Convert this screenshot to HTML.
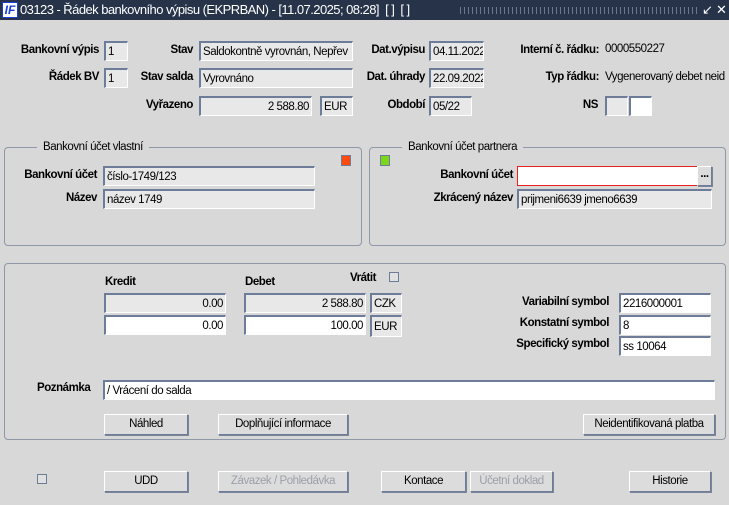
<!DOCTYPE html>
<html><head><meta charset="utf-8"><style>
*{box-sizing:border-box;margin:0;padding:0}
body{width:729px;height:505px;background:#d8d8d8;position:relative;overflow:hidden;font-family:"Liberation Sans",sans-serif;font-size:11.5px;letter-spacing:-0.45px;color:#000}
.a{position:absolute;white-space:nowrap}
.tb{left:0;top:0;width:729px;height:20px;background:#263349;color:#fff;font-size:13px;letter-spacing:-0.55px;line-height:20px}
.l{position:absolute;font-weight:bold;text-align:right;white-space:nowrap;line-height:14px}
.i{position:absolute;height:20px;background:#e8e8e8;border-top:2px solid #6d7c98;border-left:2px solid #6d7c98;border-right:1px solid #fff;border-bottom:1px solid #fff;padding:1px 2px 0;line-height:17px;white-space:nowrap;overflow:hidden}
.w{background:#fff}
.r{text-align:right}
.g{position:absolute;border:1px solid #8e98a8;border-radius:4px}
.gt{position:absolute;background:#d8d8d8;padding:0 6px;line-height:14px}
.b{position:absolute;height:21px;background:#dcdcdc;border:1px solid #6d7c98;border-top-color:#fff;border-left-color:#fff;box-shadow:1px 1px 0 #7a8599;text-align:center;line-height:19px}
.d{color:#9aa0aa}
.cb{position:absolute;width:10px;height:10px;border:1px solid #6d7c98;background:#e0e0e0}
</style></head><body>
<div class="a tb"><span style="display:inline-block;width:16px;height:16px;margin:2px 2px 0 2px;background:#fff;border:1px solid #1a3ed8;color:#1a3ed8;font-weight:bold;font-style:italic;font-size:12px;line-height:14px;text-align:center;vertical-align:top;letter-spacing:0">IF</span>03123 - Řádek bankovního výpisu (EKPRBAN) - [11.07.2025; 08:28]&nbsp; [ ]&nbsp; [ ]
<span style="position:absolute;left:460px;top:7px;width:238px;height:7px;background:repeating-linear-gradient(90deg,#6b7890 0 1px,transparent 1px 4px)"></span>
<span style="position:absolute;left:702px;top:0">&#8601;</span><span style="position:absolute;left:716px;top:0">✕</span></div>

<div class="l" style="right:630px;top:43px">Bankovní výpis</div><div class="i" style="left:104px;top:41px;width:24px">1</div>
<div class="l" style="right:630px;top:70px">Řádek BV</div><div class="i" style="left:104px;top:68px;width:24px">1</div>
<div class="l" style="right:536px;top:43px">Stav</div><div class="i" style="left:199px;top:41px;width:154px">Saldokontně vyrovnán, Nepřev</div>
<div class="l" style="right:536px;top:70px">Stav salda</div><div class="i" style="left:199px;top:68px;width:154px">Vyrovnáno</div>
<div class="l" style="right:536px;top:98px">Vyřazeno</div><div class="i r" style="left:199px;top:96px;width:113px">2 588.80</div><div class="i" style="left:320px;top:96px;width:33px">EUR</div>
<div class="l" style="right:304px;top:43px">Dat.výpisu</div><div class="i" style="left:429px;top:41px;width:55px">04.11.2022</div>
<div class="l" style="right:304px;top:70px">Dat. úhrady</div><div class="i" style="left:429px;top:68px;width:55px">22.09.2022</div>
<div class="l" style="right:304px;top:98px">Období</div><div class="i" style="left:429px;top:96px;width:43px">05/22</div>
<div class="l" style="right:130px;top:43px">Interní č. řádku:</div><div class="a" style="left:605px;top:43px">0000550227</div>
<div class="l" style="right:130px;top:70px">Typ řádku:</div><div class="a" style="left:605px;top:71px">Vygenerovaný debet neid</div>
<div class="l" style="right:131px;top:98px">NS</div><div class="i" style="left:605px;top:96px;width:23px"></div><div class="i w" style="left:629px;top:96px;width:23px"></div>

<div class="g" style="left:4px;top:147px;width:358px;height:99px"></div><div class="gt" style="left:37px;top:140px">Bankovní účet vlastní</div>
<div class="a" style="left:341px;top:155px;width:10px;height:11px;background:#ff4a10;border:1px solid #6d7c98"></div>
<div class="l" style="right:632px;top:168px">Bankovní účet</div><div class="i" style="left:103px;top:166px;width:212px">číslo-1749/123</div>
<div class="l" style="right:632px;top:191px">Název</div><div class="i" style="left:103px;top:189px;width:212px">název 1749</div>

<div class="g" style="left:369px;top:147px;width:357px;height:99px"></div><div class="gt" style="left:402px;top:140px">Bankovní účet partnera</div>
<div class="a" style="left:380px;top:155px;width:10px;height:11px;background:#7cd61a;border:1px solid #6d7c98"></div>
<div class="l" style="right:216px;top:168px">Bankovní účet</div><div class="a" style="left:517px;top:166px;width:181px;height:20px;background:#fff;border:1px solid #e82020"></div><div class="b" style="left:697px;top:166px;width:15px;height:20px;line-height:14px;font-weight:bold">...</div>
<div class="l" style="right:216px;top:191px">Zkrácený název</div><div class="i" style="left:517px;top:189px;width:195px">prijmeni6639 jmeno6639</div>

<div class="g" style="left:4px;top:263px;width:722px;height:177px"></div>
<div class="l" style="left:105px;top:275px">Kredit</div><div class="l" style="left:245px;top:275px">Debet</div>
<div class="l" style="left:350px;top:271px">Vrátit</div><div class="cb" style="left:389px;top:272px"></div>
<div class="i r" style="left:104px;top:293px;width:122px">0.00</div><div class="i r" style="left:244px;top:293px;width:122px">2 588.80</div><div class="i" style="left:370px;top:293px;width:32px">CZK</div>
<div class="i r w" style="left:104px;top:315px;width:122px">0.00</div><div class="i r w" style="left:244px;top:315px;width:122px">100.00</div><div class="i" style="left:370px;top:315px;width:32px;height:22px;line-height:19px">EUR</div>
<div class="l" style="right:120px;top:295px">Variabilní symbol</div><div class="i w" style="left:619px;top:293px;width:92px">2216000001</div>
<div class="l" style="right:120px;top:316px">Konstatní symbol</div><div class="i w" style="left:619px;top:315px;width:92px">8</div>
<div class="l" style="right:120px;top:337px">Specifický symbol</div><div class="i w" style="left:619px;top:336px;width:92px">ss 10064</div>
<div class="l" style="left:37px;top:381px">Poznámka</div><div class="i w" style="left:103px;top:380px;width:612px">/ Vrácení do salda</div>
<div class="b" style="left:104px;top:414px;width:84px">Náhled</div>
<div class="b" style="left:218px;top:414px;width:130px">Doplňující informace</div>
<div class="b" style="left:583px;top:414px;width:132px">Neidentifikovaná platba</div>

<div class="cb" style="left:37px;top:474px"></div>
<div class="b" style="left:104px;top:471px;width:84px">UDD</div>
<div class="b d" style="left:218px;top:471px;width:130px">Závazek / Pohledávka</div>
<div class="b" style="left:381px;top:471px;width:85px">Kontace</div>
<div class="b d" style="left:470px;top:471px;width:83px">Účetní doklad</div>
<div class="b" style="left:629px;top:471px;width:82px">Historie</div>
</body></html>
